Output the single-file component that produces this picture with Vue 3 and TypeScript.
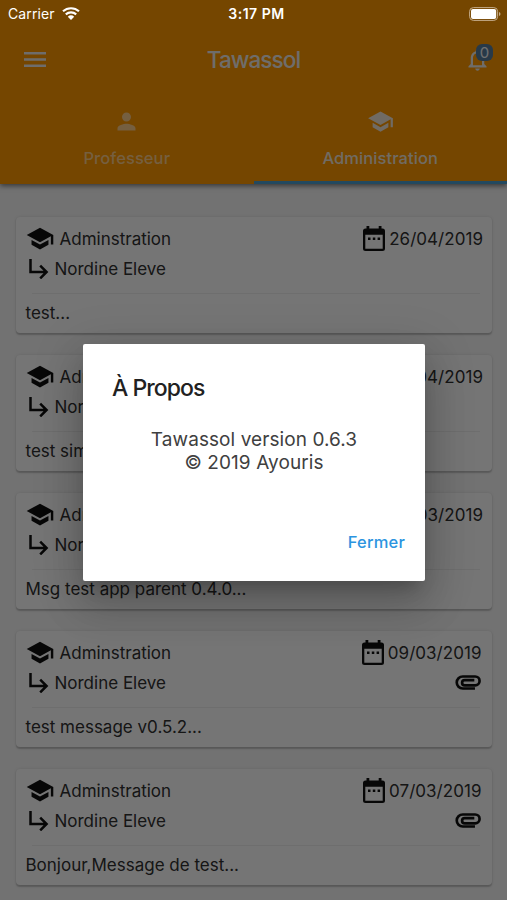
<script setup lang="ts">
import { ref } from 'vue'

interface Message {
  id: number
  date: string
  body: string
  attachment: boolean
}

const messages: Message[] = [
  { id: 1, date: '26/04/2019', body: 'test...', attachment: false },
  { id: 2, date: '24/04/2019', body: 'test simple...', attachment: false },
  { id: 3, date: '13/03/2019', body: 'Msg test app parent 0.4.0...', attachment: false },
  { id: 4, date: '09/03/2019', body: 'test message v0.5.2...', attachment: true },
  { id: 5, date: '07/03/2019', body: 'Bonjour,Message de test...', attachment: true },
]
const dialogOpen = ref(true)
const unread = ref(0)
</script>

<template>
  <div class="screen">
    <header class="appbar">
      <div class="toolbar">
        <svg class="menu" viewBox="0 0 24 16" aria-label="Menu"><path d="M1 0h22v2.6H1zM1 6.2h22v2.6H1zM1 12.4h22V15H1z" /></svg>
        <h1 class="title">Tawassol</h1>
        <div class="bell">
          <svg viewBox="0 0 24 24"><path d="M12 22c1.1 0 2-.9 2-2h-4c0 1.1.9 2 2 2zm6-6v-5c0-3.07-1.63-5.64-4.5-6.32V4c0-.83-.67-1.5-1.5-1.5s-1.5.67-1.5 1.5v.68C7.64 5.36 6 7.92 6 11v5l-2 2v1h16v-1l-2-2zm-2 1H8v-6c0-2.48 1.51-4.5 4-4.5s4 2.02 4 4.5v6z" /></svg>
          <span class="badge">{{ unread }}</span>
        </div>
      </div>
      <nav class="tabs">
        <div class="tab">
          <svg viewBox="0 0 24 24"><path d="M12 12c2.21 0 4-1.79 4-4s-1.79-4-4-4-4 1.79-4 4 1.79 4 4 4zm0 2c-2.67 0-8 1.34-8 4v2h16v-2c0-2.66-5.33-4-8-4z" /></svg>
          <span class="tab-label">Professeur</span>
        </div>
        <div class="tab active">
          <svg viewBox="0 0 24 24"><path d="M5 13.18v4L12 21l7-3.82v-4L12 17l-7-3.82zM12 3L1 9l11 6 9-4.91V17h2V9L12 3z" /></svg>
          <span class="tab-label">Administration</span>
        </div>
      </nav>
    </header>

    <main class="list">
      <article v-for="m in messages" :key="m.id" class="card">
        <div class="row">
          <svg class="cap" viewBox="0 0 24 24"><path d="M5 13.18v4L12 21l7-3.82v-4L12 17l-7-3.82zM12 3L1 9l11 6 9-4.91V17h2V9L12 3z" /></svg>
          <span class="sender">Adminstration</span>
          <svg class="calendar" viewBox="0 0 24 26"><path fill-rule="evenodd" d="M4.500 0h2.800v2.500h9.400V0h2.800v2.500H20.500A2.500 2.500 0 0 1 23 5v17.500a2.500 2.500 0 0 1-2.500 2.500h-17A2.500 2.500 0 0 1 1 22.500V5a2.500 2.500 0 0 1 2.500-2.500h1zM3.300 8.800v13.900h17.400V8.800zM6 11.500h2.500V14H6zM10.800 11.500h2.500V14h-2.500zM15.600 11.500h2.500V14h-2.500z" /></svg>
          <time class="date" :class="{ inset: m.attachment }">{{ m.date }}</time>
        </div>
        <div class="row second">
          <svg class="arrow" viewBox="0 0 20 20"><path d="M1.500 0v13H17M11.200 6.600L17.600 13l-6.400 6.400" /></svg>
          <span class="student">Nordine Eleve</span>
          <svg v-if="m.attachment" class="clip" viewBox="0 0 24 14"><path d="M18.500 12.600H7.100a5.600 5.600 0 0 1 0-11.200h11.600a4.100 4.100 0 0 1 0 8.200H8.900a2.400 2.400 0 0 1 0-4.800h9" /></svg>
        </div>
        <hr class="divider" />
        <p class="body">{{ m.body }}</p>
      </article>
    </main>

    <div v-if="dialogOpen" class="overlay">
      <section class="dialog" role="dialog">
        <h2 class="dialog-title">À Propos</h2>
        <p class="dialog-text">Tawassol version 0.6.3<br />© 2019 Ayouris</p>
        <button class="close" @click="dialogOpen = false">Fermer</button>
      </section>
    </div>

    <div class="status">
      <div class="carrier">
        <span>Carrier</span>
        <svg viewBox="0 0 18 13"><path d="M1 4.300a12 12 0 0 1 16 0M3.800 7.300a8 8 0 0 1 10.400 0" /><path class="dot" d="M5.800 9.700a5 5 0 0 1 6.400 0L9 13z" /></svg>
      </div>
      <span class="clock">3:17 PM</span>
      <svg class="battery" viewBox="0 0 32 14"><rect x=".6" y=".6" width="28" height="12.800" rx="3.800" /><path class="fill" d="M4 2h21.200a2 2 0 0 1 2 2v6a2 2 0 0 1-2 2H4a2 2 0 0 1-2-2V4a2 2 0 0 1 2-2z" /><path class="tip" d="M30 5q1.500.4 1.500 2T30 9z" /></svg>
    </div>
  </div>
</template>

<style>
body { margin: 0; overflow: hidden; }
</style>

<style scoped>
.screen { position: relative; width: 507px; height: 900px; overflow: hidden; background: #f8f8f8; font-family: Inter, "Noto Sans", sans-serif; color: #303030; }
svg { display: block; flex: none; fill: currentColor; }
.appbar { position: relative; box-sizing: border-box; height: 184px; padding-top: 27px; background: #ff9800; color: #fff; box-shadow: 0 2px 5px rgba(0, 0, 0, .5); }
.toolbar { display: grid; grid-template-columns: 1fr auto 1fr; align-items: center; height: 65px; padding: 0 14px 0 23px; color: #f0eeea; }
.menu { width: 24px; height: 16px; }
.title { margin: 0 9px 0 0; font-size: 22.5px; font-weight: 500; letter-spacing: -.9px; line-height: 30px; }
.bell { position: relative; justify-self: end; width: 29px; height: 27px; }
.bell svg { width: 27px; height: 27px; }
.badge { position: absolute; left: 12px; top: -2px; width: 17px; height: 17px; border-radius: 6px; background: #557c9e; color: #f4f4f4; font-size: 15px; line-height: 17px; text-align: center; }
.tabs { display: grid; grid-template-columns: 1fr 1fr; height: 92px; }
.tab { display: flex; flex-direction: column; align-items: center; gap: 13px; box-sizing: border-box; padding-top: 16px; color: #ffcf8b; border-bottom: 3px solid transparent; }
.tab svg { width: 27px; height: 27px; }
.tab.active { color: #f4e9da; border-color: #4e9fd0; }
.tab-label { font-size: 16.500px; line-height: 20px; font-weight: 500; letter-spacing: .08px; }
.list { display: flex; flex-direction: column; gap: 22px; padding: 33px 15px 0 16px; }
.card { box-sizing: border-box; height: 116px; padding: 7px 9px 0; background: #fff; border-radius: 4px; box-shadow: 0 1.500px 1.500px rgba(0, 0, 0, .2), 0 0 3px rgba(0, 0, 0, .1); font-size: 17px; }
.row { display: flex; align-items: center; height: 30px; }
.row.second { height: 29px; }
.cap { width: 30px; height: 29px; margin-top: -2px; color: #111; }
.sender { margin-left: 4.500px; flex: 1; }
.calendar { width: 24px; height: 26px; color: #111; }
.date { margin-left: 3px; letter-spacing: .04px; }
.date.inset { margin-right: 1.500px; }
.arrow { width: 20px; height: 20px; margin-left: 4px; fill: none; stroke: #111; stroke-width: 2.500; }
.student { margin-left: 5.500px; flex: 1; }
.clip { width: 26px; height: 15px; margin-right: 2px; fill: none; stroke: #111; stroke-width: 2.500; }
.divider { height: 1px; margin: 10px 3px 0 7px; border: 0; background: #f0f0f0; }
.body { margin: 7px 0 0 .5px; line-height: 24px; }
.overlay { position: absolute; inset: 0; display: flex; align-items: center; justify-content: center; background: rgba(0, 0, 0, .54); }
.dialog { display: flex; flex-direction: column; box-sizing: border-box; width: 342px; height: 237px; margin: 25px 0 0 1px; padding: 29px 20px 24px 29px; border-radius: 2px; background: #fff; box-shadow: 0 12px 16px -7px rgba(0, 0, 0, .2), 0 25px 40px 3px rgba(0, 0, 0, .14), 0 10px 48px 8px rgba(0, 0, 0, .12); }
.dialog-title { margin: 0; font-size: 23px; font-weight: 500; line-height: 30px; letter-spacing: -.95px; color: #212121; }
.dialog-text { margin: 25px 9px 0 0; font-size: 19px; line-height: 23px; letter-spacing: .08px; text-align: center; color: #404040; }
.close { margin-top: auto; align-self: flex-end; border: 0; padding: 0; background: none; font: 500 16.500px/30px Inter, sans-serif; letter-spacing: .2px; color: #2b94e0; }
.status { position: absolute; inset: 0 0 auto; display: grid; grid-template-columns: 1fr auto 1fr; align-items: center; height: 27px; padding: 0 6px 0 8px; color: #fff; font-size: 14px; }
.carrier { display: flex; align-items: center; gap: 7px; letter-spacing: .1px; }
.carrier svg { width: 18px; height: 13px; fill: none; stroke: #fff; stroke-width: 2.200; }
.carrier .dot { fill: #fff; stroke: none; }
.clock { margin-right: -4px; font-weight: 600; letter-spacing: .5px; }
.battery { justify-self: end; width: 32px; height: 14px; fill: none; }
.battery rect { stroke: #c5ad8b; stroke-width: 1; }
.battery .fill { fill: #fff; }
.battery .tip { fill: #c5ad8b; }
</style>
